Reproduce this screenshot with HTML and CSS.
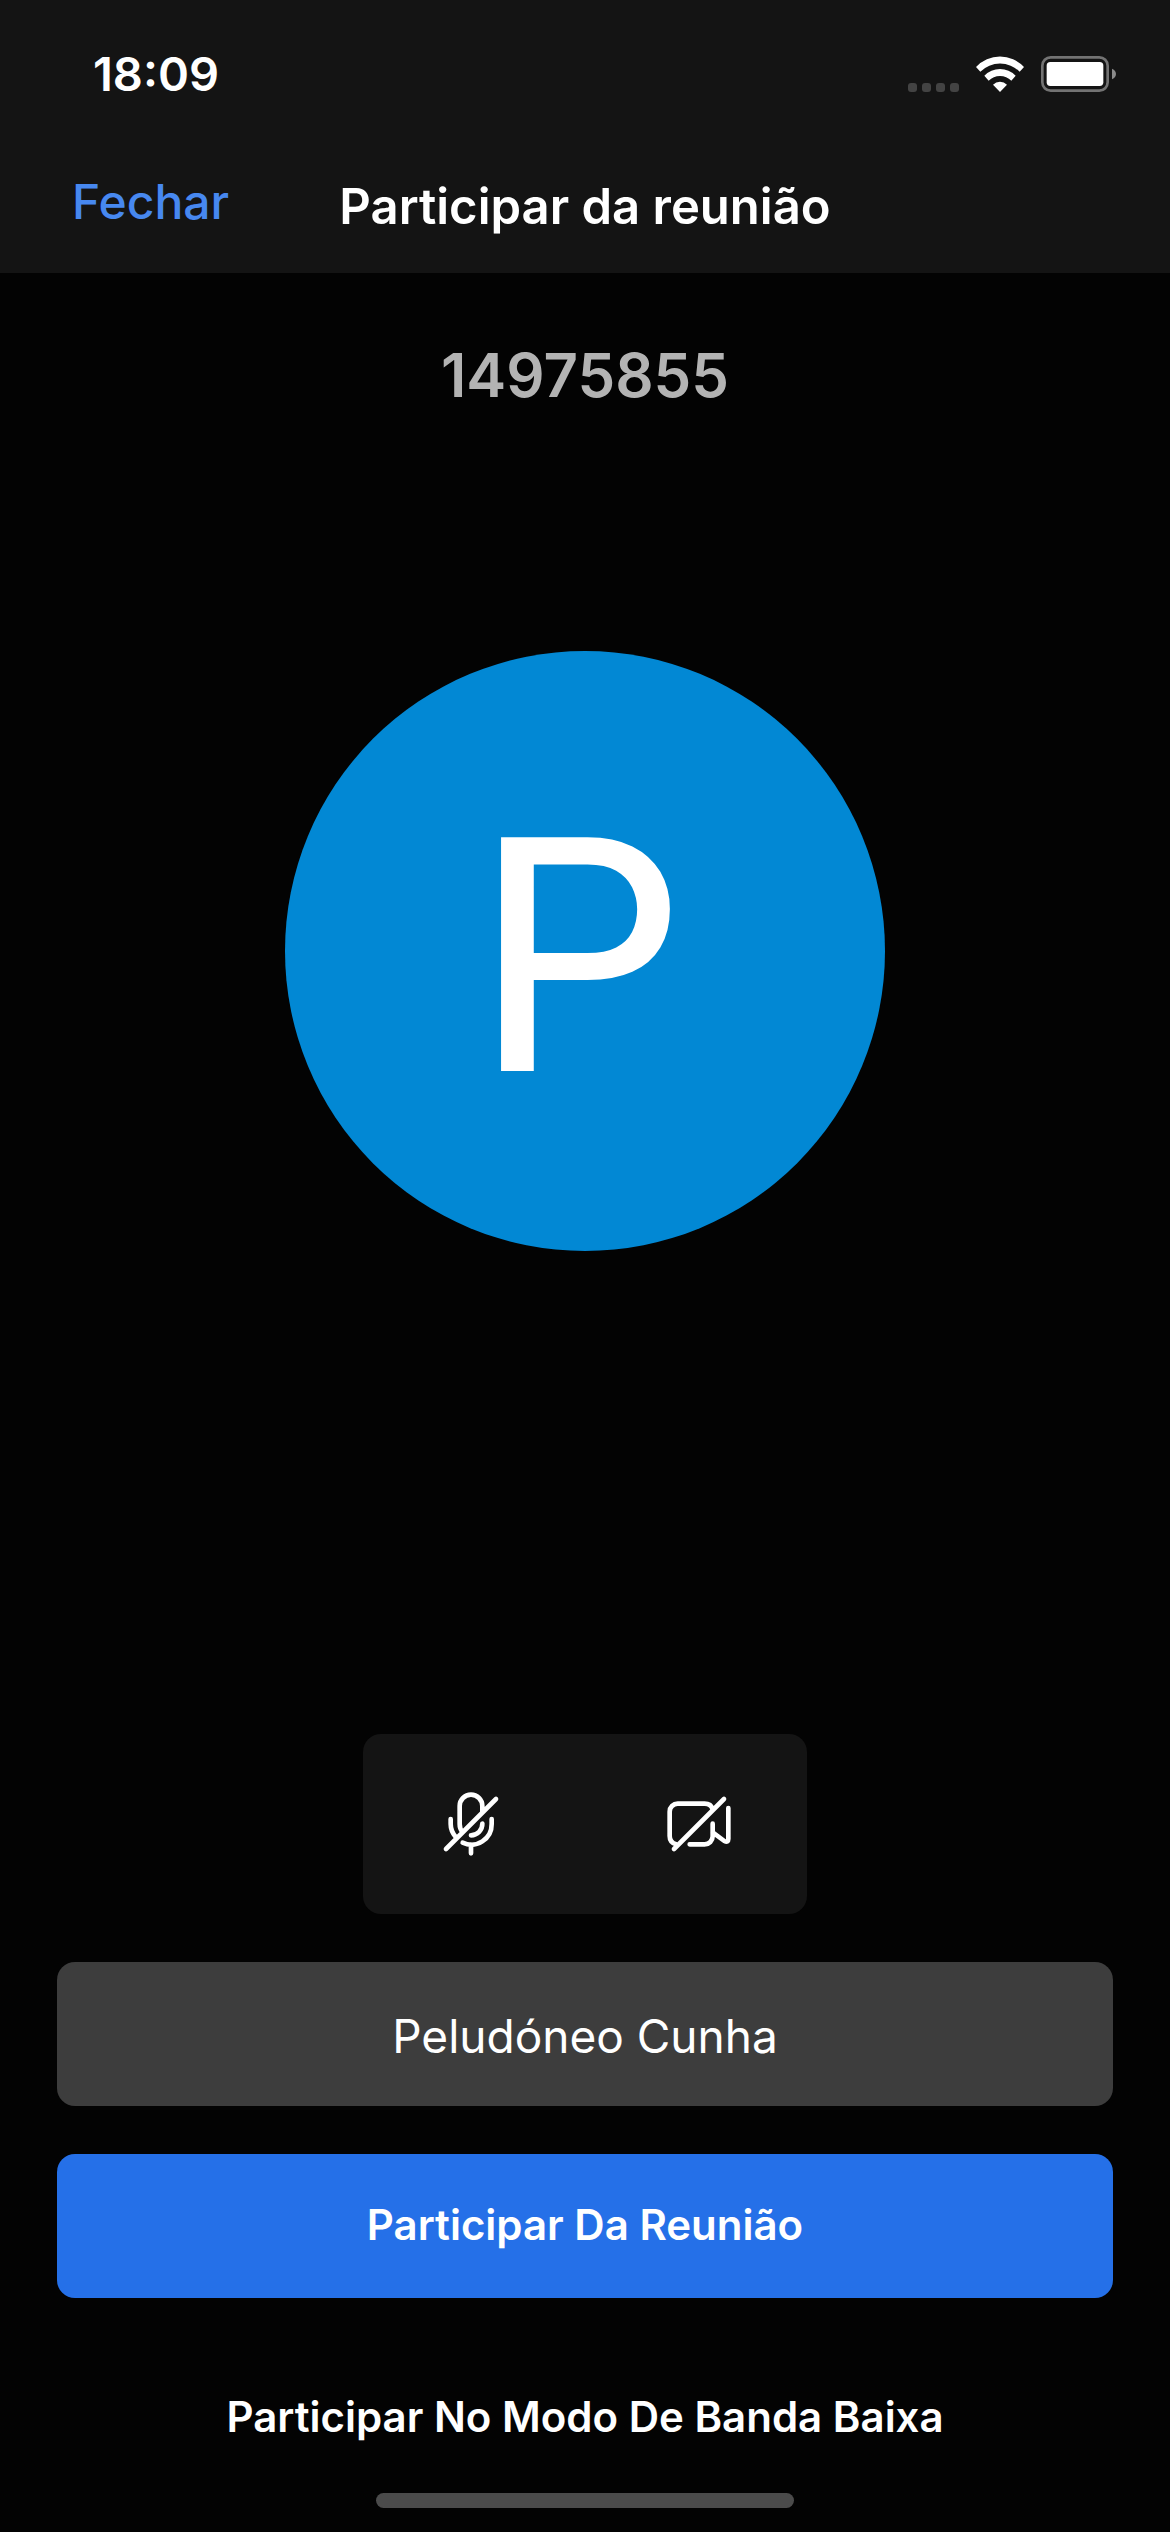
FILE: index.html
```html
<!DOCTYPE html>
<html lang="pt">
<head>
<meta charset="utf-8">
<meta name="viewport" content="width=device-width, initial-scale=1">
<title>Participar da reunião</title>
<link rel="stylesheet" href="styles.css">
</head>
<body>
<header class="header">
  <div class="status">
    <time class="clock">18:09</time>
    <div class="status-icons">
      <svg class="signal" viewBox="0 0 51 9" aria-hidden="true">
        <rect x="0" width="9" height="9" rx="3"/><rect x="14" width="9" height="9" rx="3"/><rect x="28" width="9" height="9" rx="3"/><rect x="42" width="9" height="9" rx="3"/>
      </svg>
      <svg class="wifi" viewBox="255 45 144 108" aria-hidden="true">
        <path d="M255 78A98 98 0 0 1 399 78L386 92A84 84 0 0 0 268 92ZM280 104A66 66 0 0 1 374 104L361 119A48 48 0 0 0 293 119ZM306 131A30 30 0 0 1 348 131L327 153Z"/>
      </svg>
      <svg class="battery" viewBox="450 48 225 108" aria-hidden="true">
        <rect class="battery-shell" x="454" y="52" width="196" height="100" rx="25"/>
        <rect x="467" y="66" width="170" height="72" rx="11"/>
        <path class="battery-cap" d="M663 86Q675 92 675 102T663 118Z"/>
      </svg>
    </div>
  </div>
  <nav class="nav">
    <button class="close" type="button">Fechar</button>
    <h1 class="title">Participar da reunião</h1>
  </nav>
</header>
<main class="main">
  <p class="meeting-id">14975855</p>
  <div class="stage"><div class="avatar">P</div></div>
  <div class="devices">
    <button class="device" type="button" aria-label="Ativar microfone">
      <svg viewBox="15 54 216 216" aria-hidden="true">
        <path d="M48 237L198 87M97 186Q89 176 89 162V108A34 34 0 0 1 157 108V126M62 147V162Q62 184 78 202M185 147V162A61 61 0 0 1 98 218M123 224V250M157 161A34 34 0 0 1 123 196"/>
      </svg>
    </button>
    <button class="device" type="button" aria-label="Ativar câmera">
      <svg viewBox="39 54 216 216" aria-hidden="true">
        <path d="M72 237L222 87M78 223Q59 217 59 198V125A24 24 0 0 1 83 101H164Q183 101 188 118M119 223H164A24 24 0 0 0 188 199V161M188 187L223 213Q235 219 235 207V114"/>
      </svg>
    </button>
  </div>
  <form class="form">
    <input class="field" type="text" value="Peludóneo Cunha" aria-label="Nome">
    <button class="action primary" type="submit">Participar Da Reunião</button>
    <button class="action" type="button">Participar No Modo De Banda Baixa</button>
  </form>
</main>
<div class="home-bar"></div>
</body>
</html>
```
FILE: styles.css
```css
* { box-sizing: border-box; }

body {
  display: flex;
  flex-direction: column;
  min-height: 100vh;
  margin: 0;
  background: #030303;
  color: #fff;
  font-family: Inter, "Liberation Sans", sans-serif;
}

button {
  margin: 0;
  padding: 0;
  border: 0;
  background: none;
  color: inherit;
  font: inherit;
}

svg { display: block; fill: #fff; }

.header { background: #141414; }

.status {
  display: flex;
  justify-content: space-between;
  align-items: center;
  height: 147px;
  padding: 0 54px 0 93px;
}

.clock { font-size: 47px; font-weight: 600; }

.status-icons { display: flex; align-items: flex-end; }
.signal { width: 51px; height: 9px; margin-right: 17px; fill: #434343; }
.wifi { width: 48px; height: 36px; margin-right: 17px; }
.battery { width: 75px; height: 36px; }
.battery-shell { fill: none; stroke: #737373; stroke-width: 8; }
.battery-cap { fill: #8a8a8a; }

.nav {
  display: grid;
  grid-template-columns: 1fr auto 1fr;
  align-items: start;
  height: 126px;
  padding: 25px 72px 0;
}

.close {
  justify-self: start;
  color: #4788f0;
  font-size: 48px;
  font-weight: 500;
  line-height: 60px;
}

.title {
  margin: 0;
  padding-top: 5px;
  font-size: 49px;
  font-weight: 600;
  line-height: 60px;
}

.main {
  display: flex;
  flex: 1;
  flex-direction: column;
  align-items: center;
}

.meeting-id {
  margin: 66px 0 0;
  color: #b3b3b3;
  font-size: 60px;
  font-weight: 600;
  line-height: 72px;
}

.stage {
  display: flex;
  flex: 1;
  align-items: center;
  padding-bottom: 243px;
}

.avatar {
  display: grid;
  place-items: center;
  width: 600px;
  height: 600px;
  padding: 16px 14px 0 0;
  border-radius: 50%;
  background: #0288d4;
  font: 326px Roboto, "Liberation Sans", sans-serif;
  -webkit-text-stroke: 2px #fff;
}

.devices {
  display: flex;
  justify-content: center;
  align-items: center;
  gap: 156px;
  width: 444px;
  height: 180px;
  border-radius: 18px;
  background: #141414;
}

.device svg {
  width: 72px;
  height: 72px;
  fill: none;
  stroke: #fff;
  stroke-width: 14;
  stroke-linecap: round;
  stroke-linejoin: round;
}

.form {
  display: flex;
  flex-direction: column;
  gap: 48px;
  align-self: stretch;
  padding: 48px 57px 0;
}

.field,
.action {
  width: 100%;
  height: 144px;
  border-radius: 18px;
}

.field {
  padding: 4px 24px 0;
  border: 0;
  background: #3d3d3d;
  color: #fff;
  font: 400 46px Inter, "Liberation Sans", sans-serif;
  text-align: center;
}

.action {
  padding-bottom: 3px;
  font-size: 42px;
  font-weight: 600;
}

.primary { background: #2570e8; }

.home-bar {
  align-self: center;
  width: 418px;
  height: 15px;
  margin: 3px 0 24px;
  border-radius: 8px;
  background: #4b4b4b;
}
```
